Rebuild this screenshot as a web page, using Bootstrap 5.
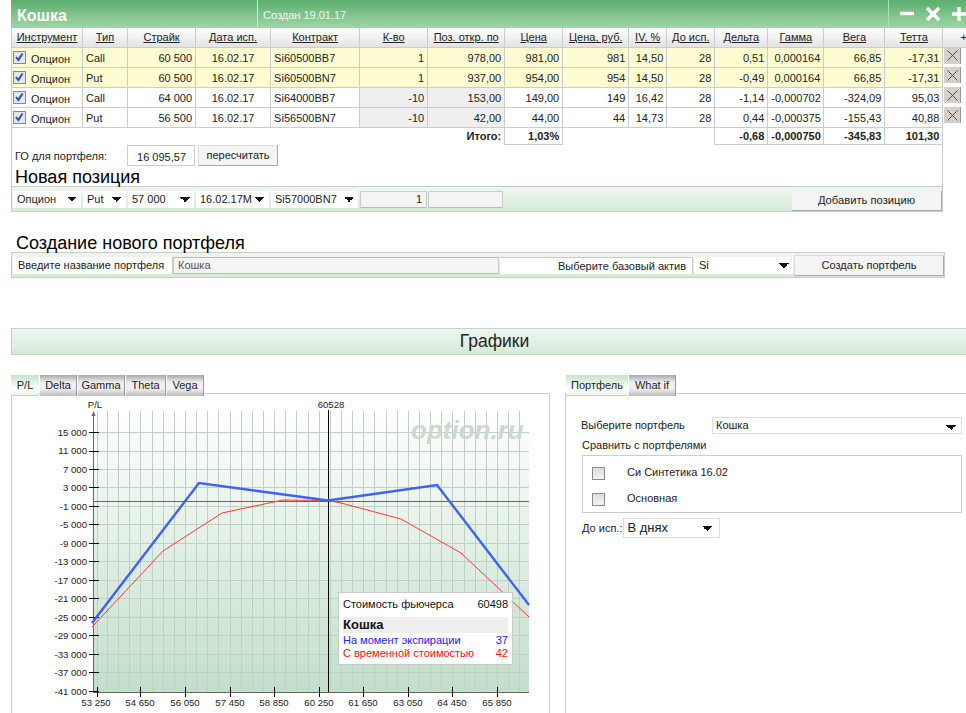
<!DOCTYPE html>
<html lang="ru"><head><meta charset="utf-8"><title>Кошка</title>
<link href="https://cdn.jsdelivr.net/npm/bootstrap@5.3.0/dist/css/bootstrap.min.css" rel="stylesheet">
<style>
html,body{height:713px;overflow:hidden}
body{font:11px/1.2 "Liberation Sans",Arial,sans-serif;color:#222;background:#fff;width:966px}
.topbar{margin-left:11px;width:955px;height:28px;background:linear-gradient(#5cad6e,#a0d6a6);color:#fff}
.topname{width:247px;font-size:16px;font-weight:700;padding-left:6px;border-right:1px solid #d6e6d8;line-height:31px}
.topdate{flex:1;font-size:11px;padding-left:5px;line-height:31px;border-right:1px solid #b5d9ba;color:#f0f8f0}
.topico{width:77px;padding-left:11px;gap:12px}
.framed{margin-left:11px;width:932px;height:184px;border-left:1px solid #ccc;border-right:1px solid #ccc}
.gridtable{table-layout:fixed;width:956px;margin:0 0 0 -1px;border-collapse:collapse;font-size:11px;--bs-table-bg:transparent;color:#222}
.table.gridtable>:not(caption)>*>*{padding:1px 3px 0 3px;border:1px solid #ccc;height:20px;line-height:16px;vertical-align:middle;white-space:nowrap;background:transparent;color:#222;box-shadow:none}
.gridtable col:nth-child(1){width:71px}.gridtable col:nth-child(2){width:45px}.gridtable col:nth-child(3){width:68px}.gridtable col:nth-child(4){width:75px}.gridtable col:nth-child(5){width:89px}.gridtable col:nth-child(6){width:68px}.gridtable col:nth-child(7){width:77px}.gridtable col:nth-child(8){width:58px}.gridtable col:nth-child(9){width:66px}.gridtable col:nth-child(10){width:38px}.gridtable col:nth-child(11){width:48px}.gridtable col:nth-child(12){width:53px}.gridtable col:nth-child(13){width:56px}.gridtable col:nth-child(14){width:61px}.gridtable col:nth-child(15){width:58px}.gridtable col:nth-child(16){width:24px}
.table.gridtable>thead>tr>th{height:19px;text-align:center;font-weight:400;background:linear-gradient(#fff,#e2e2e2);text-decoration:underline;padding:0;border-top:0}
.table.gridtable>thead>tr>th.plus{text-decoration:none;text-align:right;padding-right:0;border-right:0}
.table.gridtable>tbody>tr.yel>td{background:#fefdd2}
.table.gridtable>tbody>tr>td.inp{background:#efefef;border-left:1px solid #808080;border-top:1px solid #808080}
.table.gridtable>tbody>tr.yel>td.inp{background:#fefdd2}
.table.gridtable>tbody>tr>td.inst{padding:0 0 0 1px}
.instbox{gap:5px;padding-top:1px}
.instbox span{padding-top:2px}
.table.gridtable>tbody>tr>td.delcell{padding:0 0 0 1px;border:0;vertical-align:top}
.table.gridtable>tbody>tr.yel>td.delcell{background:transparent}
.delbtn{display:flex;align-items:center;justify-content:center;width:16px;height:16px;background:#d4d0c8;border:0;padding:0;border-radius:0;box-shadow:1px 0 0 #999}
.table.gridtable>tfoot>tr>td{font-weight:700;border:0;height:17px;line-height:14px;padding-top:0}
.table.gridtable>tfoot>tr>td.box{border:1px solid #ccc}
.form-check-input.ck[type=checkbox]{width:13px;height:13px;margin:0;border:1px solid #8a8a8a;border-radius:0;background-color:#e4e6ee;flex:none}
.form-check-input.ck[type=checkbox]:checked{background-color:#e4e6ee;border-color:#8a8a8a;background-image:url("data:image/svg+xml,%3Csvg xmlns='http://www.w3.org/2000/svg' viewBox='0 0 13 13'%3E%3Cpath d='M3 6l2.4 3L9.5 2.5' fill='none' stroke='%232a4fb0' stroke-width='2'/%3E%3C/svg%3E");background-size:13px}
.goline{height:21px;padding-left:3px}
.golabel{width:112px;padding-top:5px}
.gobox{width:68px;height:21px;border:1px solid #ccc;text-align:right;padding:3px 8px 0 0;font-size:11px;line-height:16px;margin-right:3px}
.flatbtn{background:#f4f4f4;border:0;border-bottom:1px solid #aaa;border-right:1px solid #aaa;border-radius:0;padding:0;font-size:11px;color:#222;line-height:15px}
.flatbtn.recalc{width:80px;height:21px;border-top:1px solid #ddd;border-left:1px solid #ddd;padding-top:1px}
.secttitle{font-size:18px;line-height:20px;font-weight:400;color:#000;margin:0;padding:0}
.secttitle.t1{padding-left:3px;height:20px;line-height:22px}
.secttitle.t2{margin:22px 0 0 16px;height:18px;line-height:18px}
.band{background:linear-gradient(#eef6ef,#d6ead9);border:1px solid #ccc;border-left:1px solid #ccc}
.newbar{margin-left:-1px;width:932px;height:26px;padding:4px 0 0 1px}
.form-select.fsel{height:17px;min-height:0;width:auto;font-size:11px;line-height:15px;border:0;border-radius:0;padding:0 0 0 4px;color:#222;background-color:#fff;background-image:linear-gradient(45deg,transparent 50%,#111 50%),linear-gradient(-45deg,transparent 50%,#111 50%);background-size:5px 5px,5px 5px;background-position:right 9px top 6px,right 4px top 6px;background-repeat:no-repeat;flex:none}
.form-select.w68{width:68px}.form-select.w43{width:43px}.form-select.w66{width:66px}.form-select.w73{width:73px}.form-select.w87{width:87px}
.newbar .fsel{margin-right:2px}
.inpbox{background:#f4f4f4;border:1px solid #ccc;border-bottom-color:#bbb;height:17px;line-height:15px;padding:0 4px;flex:none}
.qty{width:67px;margin-right:1px;text-align:right}
.qty2{width:75px}
.flatbtn.addbtn{width:150px;height:20px;margin-left:auto;margin-top:0;font-size:11.2px}
.createbar{margin-left:11px;width:934px;height:26px;padding:4px 0 0 1px}
.namelbl{width:160px;height:17px;background:#fff;line-height:16px;padding-left:5px;border-right:1px solid #ccc}
.nameval{width:326px;color:#555;border-top-color:#bbb}
.baselbl{width:193px;height:17px;background:#fff;text-align:right;line-height:16px;padding-right:6px;margin-left:1px;border-top:1px solid #ccc;border-right:1px solid #ccc}
.form-select.w100{width:99px;margin-left:1px;padding-left:5px}
.flatbtn.mkbtn{width:150px;height:21px;margin-left:1px;margin-top:-2px;font-size:11px;border-top:1px solid #ddd;border-left:1px solid #ddd}
.graphbar{margin:50px 0 0 11px;width:967px;height:27px;text-align:center;font-size:17.5px;line-height:25px;color:#222}
.lower{margin-top:20px;gap:15px;margin-left:11px}
.leftcol{width:539px;flex:none}.rightcol{width:401px;flex:none}
.tabstrip{height:18px;border:0;flex-wrap:nowrap;gap:1px;padding:0;margin:0;--bs-nav-link-padding-x:0;--bs-nav-link-padding-y:0;position:relative;z-index:1}
.rightcol .tabstrip{padding-left:1px}
.tabstrip .nav-link{display:block;height:21px;border:0;border-radius:0;color:#222;font-size:11px;line-height:20px;text-align:center;margin:0;background:linear-gradient(#a8a8a8,#eee 35%,#f0f0f0 65%,#bbb);border-right:1px solid #999;padding:0}
.tabstrip .nav-link.active{background:linear-gradient(#c4e4c9,#fff 70%,#eaf6ec);border-right:0;border-bottom:1px solid #b6dcbc;color:#222}
.tw27{width:28px}.tw36{width:37px}.tw46{width:47px}.tw39{width:40px}.tw37{width:37px}.tw62{width:62px}.tw47{width:47px}
.panel{height:320px;border:1px solid #ccc;border-bottom:0;background:#fff;position:relative}
.rightcol .panel{border-right:0;padding:23px 0 0 15px}
.chartsvg{display:block}
.tipbox{position:absolute;left:326px;top:198px;width:175px;height:73px;background:#fff;border:1px solid #ccc;padding:4px 4px 0 4px;font-size:11px;line-height:13px;color:#111}
.tipline{height:20px;padding-top:1px}
.tiphead{background:#eee;height:16px;font-size:13px;font-weight:700;line-height:15px;margin-bottom:1px}
.tipblue{color:#2222ff;height:13px}.tipred{color:#f01010;height:13px}
.sellbl{width:131px;font-size:11px;padding-top:2px}
.form-select.pfsel{width:250px;height:17px;border:1px solid #ddd;padding-left:3px;background-position:right 10px top 7px,right 5px top 7px;margin:0}
.cmplbl{margin:5px 0 0 1px;height:14px;line-height:13px}
.cmpbox{margin-left:1px;width:380px;height:58px;border:1px solid #ccc;padding:11px 0 0 9px;margin-top:2px}
.cmprow{height:26px;gap:22px;align-items:flex-start}
.form-check-input.ck.ckgrey[type=checkbox]{background:linear-gradient(#ddd,#f4f4f4)}
.cmprow span{line-height:12px;margin-top:-1px}
.expline{margin:5px 0 0 1px;gap:1px}
.form-select.expsel{width:97px;height:20px;font-size:13px;border:1px solid #ddd;line-height:18px;padding-left:3px;background-position:right 12px top 7px,right 7px top 7px;margin:0}
.exptxt{line-height:21px}
text{font-family:"Liberation Sans",Arial,sans-serif}
</style></head><body>
<div class="topbar d-flex">
 <div class="topname">Кошка</div>
 <div class="topdate">Создан 19.01.17</div>
 <div class="topico d-flex align-items-center">
  <svg width="14" height="14" viewBox="0 0 14 14"><path d="M0 6.5h14" stroke="#fff" stroke-width="3.4"/></svg>
  <svg width="14" height="14" viewBox="0 0 14 14"><path d="M1 1l12 12M13 1L1 13" stroke="#fff" stroke-width="3.4"/></svg>
  <svg width="14" height="14" viewBox="0 0 14 14"><path d="M0 7h14M7 0v14" stroke="#fff" stroke-width="3.4"/></svg>
 </div>
</div>
<div class="framed">
 <table class="table gridtable">
  <colgroup><col><col><col><col><col><col><col><col><col><col><col><col><col><col><col><col></colgroup>
  <thead><tr><th>Инструмент</th><th>Тип</th><th>Страйк</th><th>Дата исп.</th><th>Контракт</th><th>К-во</th><th>Поз. откр. по</th><th>Цена</th><th>Цена, руб.</th><th>IV, %</th><th>До исп.</th><th>Дельта</th><th>Гамма</th><th>Вега</th><th>Тетта</th><th class="plus">+</th></tr></thead>
  <tbody>
  <tr class="yel"><td class="inst"><div class="d-flex align-items-center instbox"><input class="form-check-input ck" type="checkbox" checked><span>Опцион</span></div></td><td>Call</td><td class="text-end">60 500</td><td class="text-center">16.02.17</td><td>Si60500BB7</td><td class="inp text-end">1</td><td class="inp text-end">978,00</td><td class="text-end">981,00</td><td class="text-end">981</td><td class="text-end">14,50</td><td class="text-end">28</td><td class="text-end">0,51</td><td class="text-end">0,000164</td><td class="text-end">66,85</td><td class="text-end">-17,31</td><td class="delcell"><button class="btn delbtn" type="button" aria-label="Удалить"><svg width="11" height="11" viewBox="0 0 11 11"><path d="M.5.5l10 10M10.5.5l-10 10" stroke="#444" stroke-width=".9" fill="none"/></svg></button></td></tr>
  <tr class="yel"><td class="inst"><div class="d-flex align-items-center instbox"><input class="form-check-input ck" type="checkbox" checked><span>Опцион</span></div></td><td>Put</td><td class="text-end">60 500</td><td class="text-center">16.02.17</td><td>Si60500BN7</td><td class="inp text-end">1</td><td class="inp text-end">937,00</td><td class="text-end">954,00</td><td class="text-end">954</td><td class="text-end">14,50</td><td class="text-end">28</td><td class="text-end">-0,49</td><td class="text-end">0,000164</td><td class="text-end">66,85</td><td class="text-end">-17,31</td><td class="delcell"><button class="btn delbtn" type="button" aria-label="Удалить"><svg width="11" height="11" viewBox="0 0 11 11"><path d="M.5.5l10 10M10.5.5l-10 10" stroke="#444" stroke-width=".9" fill="none"/></svg></button></td></tr>
  <tr><td class="inst"><div class="d-flex align-items-center instbox"><input class="form-check-input ck" type="checkbox" checked><span>Опцион</span></div></td><td>Call</td><td class="text-end">64 000</td><td class="text-center">16.02.17</td><td>Si64000BB7</td><td class="inp text-end">-10</td><td class="inp text-end">153,00</td><td class="text-end">149,00</td><td class="text-end">149</td><td class="text-end">16,42</td><td class="text-end">28</td><td class="text-end">-1,14</td><td class="text-end">-0,000702</td><td class="text-end">-324,09</td><td class="text-end">95,03</td><td class="delcell"><button class="btn delbtn" type="button" aria-label="Удалить"><svg width="11" height="11" viewBox="0 0 11 11"><path d="M.5.5l10 10M10.5.5l-10 10" stroke="#444" stroke-width=".9" fill="none"/></svg></button></td></tr>
  <tr><td class="inst"><div class="d-flex align-items-center instbox"><input class="form-check-input ck" type="checkbox" checked><span>Опцион</span></div></td><td>Put</td><td class="text-end">56 500</td><td class="text-center">16.02.17</td><td>Si56500BN7</td><td class="inp text-end">-10</td><td class="inp text-end">42,00</td><td class="text-end">44,00</td><td class="text-end">44</td><td class="text-end">14,73</td><td class="text-end">28</td><td class="text-end">0,44</td><td class="text-end">-0,000375</td><td class="text-end">-155,43</td><td class="text-end">40,88</td><td class="delcell"><button class="btn delbtn" type="button" aria-label="Удалить"><svg width="11" height="11" viewBox="0 0 11 11"><path d="M.5.5l10 10M10.5.5l-10 10" stroke="#444" stroke-width=".9" fill="none"/></svg></button></td></tr>
  </tbody>
  <tfoot><tr><td colspan="7" class="text-end">Итого:</td><td class="box text-end">1,03%</td><td colspan="3" class="blank"></td><td class="box text-end">-0,68</td><td class="box text-end">-0,000750</td><td class="box text-end">-345,83</td><td class="box text-end">101,30</td><td class="blank"></td></tr></tfoot>
 </table>
 <div class="goline d-flex">
  <div class="golabel">ГО для портфеля:</div><div class="gobox">16 095,57</div><button class="btn flatbtn recalc" type="button">пересчитать</button>
 </div>
 <h2 class="secttitle t1">Новая позиция</h2>
 <div class="band newbar d-flex">
  <select class="form-select fsel w68"><option>Опцион</option></select>
  <select class="form-select fsel w43"><option>Put</option></select>
  <select class="form-select fsel w66"><option>57 000</option></select>
  <select class="form-select fsel w73"><option>16.02.17M</option></select>
  <select class="form-select fsel w87"><option>Si57000BN7</option></select>
  <div class="inpbox qty">1</div><div class="inpbox qty2"></div>
  <button class="btn flatbtn addbtn" type="button">Добавить позицию</button>
 </div>
</div>
<h2 class="secttitle t2">Создание нового портфеля</h2>
<div class="band createbar d-flex">
 <div class="namelbl">Введите название портфеля</div>
 <div class="inpbox nameval">Кошка</div>
 <div class="baselbl">Выберите базовый актив</div>
 <select class="form-select fsel w100"><option>Si</option></select>
 <button class="btn flatbtn mkbtn" type="button">Создать портфель</button>
</div>
<div class="band graphbar">Графики</div>
<div class="lower d-flex">
 <div class="leftcol">
  <ul class="nav tabstrip">
   <li class="nav-item"><a class="nav-link active tw27" href="#">P/L</a></li>
   <li class="nav-item"><a class="nav-link tw36" href="#">Delta</a></li>
   <li class="nav-item"><a class="nav-link tw46" href="#">Gamma</a></li>
   <li class="nav-item"><a class="nav-link tw39" href="#">Theta</a></li>
   <li class="nav-item"><a class="nav-link tw37" href="#">Vega</a></li>
  </ul>
  <div class="panel">
   <svg class="chartsvg" width="537" height="320" viewBox="12 394 537 320" aria-label="График P/L">
    <defs><linearGradient id="plotbg" x1="0" y1="0" x2="0" y2="1"><stop offset="0" stop-color="#fff"/><stop offset="1" stop-color="#c2deca"/></linearGradient></defs>
    <rect x="93" y="411" width="436" height="281" fill="url(#plotbg)"/>
    <path shape-rendering="crispEdges" fill="none" stroke="#bfd0c4" d="M97.5 411V692M107.5 411V692M118.5 411V692M129.5 411V692M140.5 411V692M152.5 411V692M163.5 411V692M174.5 411V692M185.5 411V692M196.5 411V692M207.5 411V692M218.5 411V692M230.5 411V692M241.5 411V692M252.5 411V692M263.5 411V692M274.5 411V692M285.5 411V692M296.5 411V692M308.5 411V692M319.5 411V692M330.5 411V692M341.5 411V692M352.5 411V692M363.5 411V692M374.5 411V692M386.5 411V692M397.5 411V692M408.5 411V692M419.5 411V692M430.5 411V692M441.5 411V692M452.5 411V692M464.5 411V692M475.5 411V692M486.5 411V692M497.5 411V692M508.5 411V692M519.5 411V692M93 432.5H529M93 451.5H529M93 469.5H529M93 487.5H529M93 506.5H529M93 524.5H529M93 543.5H529M93 561.5H529M93 580.5H529M93 598.5H529M93 617.5H529M93 635.5H529M93 654.5H529M93 672.5H529"/>
    <text x="411" y="439" font-size="26" font-weight="700" font-style="italic" fill="#ccd8d0">option.ru</text>
    <path shape-rendering="crispEdges" fill="none" stroke="#666" d="M93.5 414V692.5H529M93 501.5H529"/>
    <path fill="#666" d="M93.5 411l-2 5h4z"/>
    <path shape-rendering="crispEdges" fill="none" stroke="#000" d="M89 432.5h10M89 451.5h10M89 469.5h10M89 487.5h10M89 506.5h10M89 524.5h10M89 543.5h10M89 561.5h10M89 580.5h10M89 598.5h10M89 617.5h10M89 635.5h10M89 654.5h10M89 672.5h10M89 691.5h10M97.5 687v10M140.5 687v10M185.5 687v10M230.5 687v10M274.5 687v10M319.5 687v10M363.5 687v10M408.5 687v10M452.5 687v10M497.5 687v10M328.5 410V692"/>
    <g font-size="9.6" text-anchor="end" fill="#222"><text x="87" y="436">15 000</text><text x="87" y="454">11 000</text><text x="87" y="473">7 000</text><text x="87" y="491">3 000</text><text x="87" y="510">-1 000</text><text x="87" y="528">-5 000</text><text x="87" y="547">-9 000</text><text x="87" y="565">-13 000</text><text x="87" y="584">-17 000</text><text x="87" y="602">-21 000</text><text x="87" y="621">-25 000</text><text x="87" y="639">-29 000</text><text x="87" y="658">-33 000</text><text x="87" y="676">-37 000</text><text x="87" y="695">-41 000</text></g>
    <g font-size="9.6" text-anchor="middle" fill="#222"><text x="96" y="706">53 250</text><text x="140" y="706">54 650</text><text x="185" y="706">56 050</text><text x="230" y="706">57 450</text><text x="274" y="706">58 850</text><text x="319" y="706">60 250</text><text x="363" y="706">61 650</text><text x="408" y="706">63 050</text><text x="452" y="706">64 450</text><text x="497" y="706">65 850</text><text x="95" y="408">P/L</text><text x="331" y="408">60528</text></g>
    <polyline fill="none" stroke="#ff3838" stroke-width="1" points="92,627 163,551 222,513 283,500 328,500.5 341,503 401,519 461,553 529,617"/>
    <polyline fill="none" stroke="#3f62f2" stroke-width="2.4" points="92,623 199,483 328,500.5 437,485 529,605"/>
   </svg>
   <div class="tipbox">
    <div class="d-flex justify-content-between tipline"><span>Стоимость фьючерса</span><span>60498</span></div>
    <div class="tiphead">Кошка</div>
    <div class="d-flex justify-content-between tipblue"><span>На момент экспирации</span><span>37</span></div>
    <div class="d-flex justify-content-between tipred"><span>С временной стоимостью</span><span>42</span></div>
   </div>
  </div>
 </div>
 <div class="rightcol">
  <ul class="nav tabstrip">
   <li class="nav-item"><a class="nav-link active tw62" href="#">Портфель</a></li>
   <li class="nav-item"><a class="nav-link tw47" href="#">What if</a></li>
  </ul>
  <div class="panel">
   <div class="d-flex"><div class="sellbl">Выберите портфель</div><select class="form-select fsel pfsel"><option>Кошка</option></select></div>
   <div class="cmplbl">Сравнить с портфелями</div>
   <div class="cmpbox">
    <div class="d-flex cmprow"><input class="form-check-input ck ckgrey" type="checkbox"><span>Си Синтетика 16.02</span></div>
    <div class="d-flex cmprow"><input class="form-check-input ck ckgrey" type="checkbox"><span>Основная</span></div>
   </div>
   <div class="d-flex expline"><div class="exptxt">До исп.:</div><select class="form-select fsel expsel"><option>В днях</option></select></div>
  </div>
 </div>
</div>
<script src="https://cdn.jsdelivr.net/npm/bootstrap@5.3.0/dist/js/bootstrap.bundle.min.js"></script>
</body></html>
